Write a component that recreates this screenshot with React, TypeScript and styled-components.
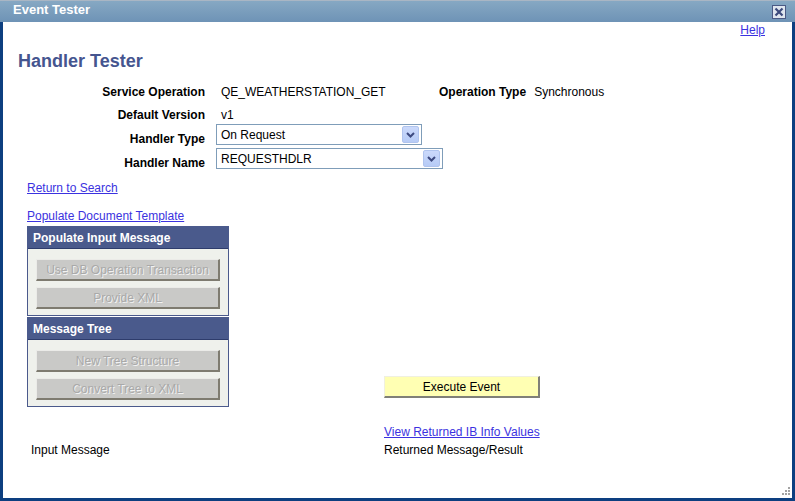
import React from 'react';
import styled, { createGlobalStyle } from 'styled-components';

const GlobalStyle = createGlobalStyle`
  html, body { margin: 0; padding: 0; background: #ffffff; }
  body { font-family: "Liberation Sans", Arial, sans-serif; font-size: 12px; color: #000; }
  #root { width: 795px; height: 501px; }
`;

const Window = styled.div`
  width: 795px;
  height: 501px;
  display: flex;
  flex-direction: column;
  box-sizing: border-box;
  position: relative;
  overflow: hidden;
`;

const TitleBar = styled.div`
  height: 22px;
  flex: 0 0 22px;
  box-sizing: border-box;
  border-top: 1px solid #a9b6c4;
  background: linear-gradient(#86a8c3, #6e93b6);
  display: flex;
  align-items: center;
  justify-content: space-between;
  padding: 0 9px 4px 13px;
`;

const Title = styled.span`
  color: #ffffff;
  font-weight: bold;
  font-size: 13px;
`;

const CloseBox = styled.div`
  width: 12px;
  height: 12px;
  border: 1px solid #4b5a85;
  background: #dfe6ef;
  display: flex;
  align-items: center;
  justify-content: center;
  margin-top: 4px;
`;

const Body = styled.div`
  flex: 1;
  border: 3px solid #0d3f80;
  border-top: none;
  display: flex;
  flex-direction: column;
  position: relative;
`;

const HelpRow = styled.div`
  display: flex;
  justify-content: flex-end;
  padding: 1px 27px 0 0;
  height: 15px;
`;

const Link = styled.a`
  color: #3b32e0;
  text-decoration: underline;
  cursor: pointer;
  font-size: 12px;
`;

const Heading = styled.h1`
  margin: 12px 0 0 15px;
  font-size: 18px;
  font-weight: bold;
  color: #45558f;
  line-height: 22px;
`;

const Form = styled.div`
  margin-top: 9px;
  display: flex;
  flex-direction: column;
`;

const FormRow = styled.div<{ $mt: number; $h: number }>`
  display: flex;
  align-items: flex-end;
  height: ${p => p.$h}px;
  margin-top: ${p => p.$mt}px;
`;

const Label = styled.div<{ $pb?: number }>`
  width: 202px;
  text-align: right;
  font-weight: bold;
  padding-bottom: ${p => p.$pb ?? 2}px;
`;

const LabelInline = styled.div`
  font-weight: bold;
  margin-right: 8px;
  padding-bottom: 2px;
`;

const Value = styled.div<{ $w?: number }>`
  margin-left: 16px;
  width: ${p => (p.$w ? `${p.$w}px` : 'auto')};
  padding-bottom: 2px;
`;

const InlineValue = styled.div`
  padding-bottom: 2px;
`;

const Select = styled.div<{ $w: number }>`
  margin-left: 11px;
  width: ${p => p.$w}px;
  height: 21px;
  box-sizing: border-box;
  border: 1px solid #7f9db9;
  background: #fff;
  display: flex;
  align-items: center;
  justify-content: space-between;
  padding: 0 2px 0 4px;
  align-self: flex-start;
`;

const ArrowBtn = styled.div`
  width: 15px;
  height: 15px;
  border-radius: 2px;
  background: linear-gradient(#cbd9fb, #b6cbf6);
  border: 1px solid #b0c4ee;
  display: flex;
  align-items: center;
  justify-content: center;
`;

const Columns = styled.div`
  display: flex;
  margin-top: 11px;
`;

const LeftCol = styled.div`
  width: 381px;
  padding-left: 24px;
  box-sizing: border-box;
  display: flex;
  flex-direction: column;
`;

const RightCol = styled.div`
  display: flex;
  flex-direction: column;
`;

const LinkRow = styled.div<{ $mt: number }>`
  margin-top: ${p => p.$mt}px;
  height: 14px;
  line-height: 14px;
`;

const Group = styled.div<{ $mt: number }>`
  width: 202px;
  box-sizing: border-box;
  border: 1px solid #4b5a8c;
  margin-top: ${p => p.$mt}px;
  background: #eff1ec;
`;

const GroupHeader = styled.div`
  height: 21px;
  background: #4a5a8c;
  color: #fff;
  font-weight: bold;
  display: flex;
  align-items: center;
  padding-left: 5px;
  border-bottom: 1px solid #2e3c6c;
`;

const GroupBody = styled.div`
  padding: 10px 8px 6px 8px;
  display: flex;
  flex-direction: column;
  gap: 6px;
`;

const DisabledButton = styled.div`
  height: 22px;
  box-sizing: border-box;
  background: #c9c9c7;
  border-top: 1px solid #ebebe8;
  border-left: 1px solid #ebebe8;
  border-right: 2px solid #7e7b70;
  border-bottom: 2px solid #7e7b70;
  color: #a9a9a9;
  text-shadow: 1px 1px 0 #f2f2f2;
  display: flex;
  align-items: center;
  justify-content: center;
`;

const ExecuteButton = styled.div`
  margin-top: 195px;
  width: 156px;
  height: 22px;
  box-sizing: border-box;
  background: #ffffb3;
  border-top: 1px solid #f0f0e0;
  border-left: 1px solid #f0f0e0;
  border-right: 2px solid #808078;
  border-bottom: 2px solid #808078;
  display: flex;
  align-items: center;
  justify-content: center;
  color: #000;
`;

const BottomRow = styled.div<{ $mt: number }>`
  display: flex;
  margin-top: ${p => p.$mt}px;
  height: 14px;
  line-height: 14px;
`;

const BottomLeft = styled.div`
  width: 353px;
  padding-left: 28px;
`;

const Grip = styled.div`
  position: absolute;
  right: 1px;
  bottom: 2px;
  width: 10px;
  height: 10px;
`;

const Chevron = () => (
  <svg width="9" height="6" viewBox="0 0 9 6">
    <path d="M1 1 L4.5 4.5 L8 1" stroke="#3d4a80" strokeWidth="2" fill="none" />
  </svg>
);

const CloseIcon = () => (
  <svg width="10" height="10" viewBox="0 0 10 10">
    <path d="M1.5 1.5 L8.5 8.5 M8.5 1.5 L1.5 8.5" stroke="#3c4a7c" strokeWidth="2.2" />
  </svg>
);

const GripIcon = () => (
  <svg width="10" height="10" viewBox="0 0 10 10">
    <g fill="#a3a3a3">
      <rect x="7" y="0" width="2" height="2" />
      <rect x="4" y="3" width="2" height="2" />
      <rect x="7" y="3" width="2" height="2" />
      <rect x="1" y="6" width="2" height="2" />
      <rect x="4" y="6" width="2" height="2" />
      <rect x="7" y="6" width="2" height="2" />
    </g>
  </svg>
);

const groups = [
  { title: 'Populate Input Message', buttons: ['Use DB Operation Transaction', 'Provide XML'], mt: 3 },
  { title: 'Message Tree', buttons: ['New Tree Structure', 'Convert Tree to XML'], mt: 1 },
];

export default function App() {
  return (
    <>
      <GlobalStyle />
      <Window>
        <TitleBar>
          <Title>Event Tester</Title>
          <CloseBox>
            <CloseIcon />
          </CloseBox>
        </TitleBar>
        <Body>
          <HelpRow>
            <Link>Help</Link>
          </HelpRow>
          <Heading>Handler Tester</Heading>
          <Form>
            <FormRow $mt={0} $h={20}>
              <Label>Service Operation</Label>
              <Value $w={218}>QE_WEATHERSTATION_GET</Value>
              <LabelInline>Operation Type</LabelInline>
              <InlineValue>Synchronous</InlineValue>
            </FormRow>
            <FormRow $mt={4} $h={19}>
              <Label>Default Version</Label>
              <Value>v1</Value>
            </FormRow>
            <FormRow $mt={0} $h={22}>
              <Label $pb={0}>Handler Type</Label>
              <Select $w={206}>
                <span>On Request</span>
                <ArrowBtn>
                  <Chevron />
                </ArrowBtn>
              </Select>
            </FormRow>
            <FormRow $mt={2} $h={22}>
              <Label $pb={0}>Handler Name</Label>
              <Select $w={227}>
                <span>REQUESTHDLR</span>
                <ArrowBtn>
                  <Chevron />
                </ArrowBtn>
              </Select>
            </FormRow>
          </Form>
          <Columns>
            <LeftCol>
              <LinkRow $mt={0}>
                <Link>Return to Search</Link>
              </LinkRow>
              <LinkRow $mt={14}>
                <Link>Populate Document Template</Link>
              </LinkRow>
              {groups.map(g => (
                <Group key={g.title} $mt={g.mt}>
                  <GroupHeader>{g.title}</GroupHeader>
                  <GroupBody>
                    {g.buttons.map(b => (
                      <DisabledButton key={b}>{b}</DisabledButton>
                    ))}
                  </GroupBody>
                </Group>
              ))}
            </LeftCol>
            <RightCol>
              <ExecuteButton>Execute Event</ExecuteButton>
            </RightCol>
          </Columns>
          <BottomRow $mt={18}>
            <BottomLeft />
            <Link>View Returned IB Info Values</Link>
          </BottomRow>
          <BottomRow $mt={4}>
            <BottomLeft>Input Message</BottomLeft>
            <div>Returned Message/Result</div>
          </BottomRow>
          <Grip>
            <GripIcon />
          </Grip>
        </Body>
      </Window>
    </>
  );
}
